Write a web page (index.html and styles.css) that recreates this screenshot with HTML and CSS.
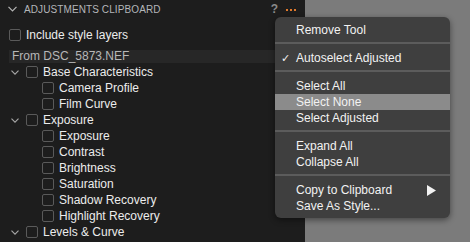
FILE: index.html
```html
<!DOCTYPE html>
<html lang="en">
<head>
  <meta charset="UTF-8" />
  <title>Adjustments Clipboard</title>
  <link rel="stylesheet" href="styles.css">
</head>
<body>
  <div class="screen">
    <div class="panel">
      <div class="panel-head">
        <svg class="chev" width="9" height="6" viewBox="0 0 9 6"><path d="M0.5 0.8 L4.5 4.8 L8.5 0.8" fill="none" stroke="#b5b5b5" stroke-width="1.2"/></svg>
        <span class="panel-title">ADJUSTMENTS CLIPBOARD</span>
        <span class="help">?</span>
        <span class="more">
          <i></i><i></i><i></i>
        </span>
      </div>

      <label class="include-row">
        <span class="box"></span>
        <span>Include style layers</span>
      </label>

      <div class="source">From DSC_5873.NEF</div>

      <ul class="tree">
        <li class="group">
          <svg class="chev" width="8" height="5" viewBox="0 0 8 5"><path d="M0.5 0.6 L4 4.2 L7.5 0.6" fill="none" stroke="#a8a8a8" stroke-width="1.1"/></svg>
          <span class="box"></span>Base Characteristics
        </li>
        <li class="item"><span class="box"></span>Camera Profile</li>
        <li class="item"><span class="box"></span>Film Curve</li>
        <li class="group">
          <svg class="chev" width="8" height="5" viewBox="0 0 8 5"><path d="M0.5 0.6 L4 4.2 L7.5 0.6" fill="none" stroke="#a8a8a8" stroke-width="1.1"/></svg>
          <span class="box"></span>Exposure
        </li>
        <li class="item"><span class="box"></span>Exposure</li>
        <li class="item"><span class="box"></span>Contrast</li>
        <li class="item"><span class="box"></span>Brightness</li>
        <li class="item"><span class="box"></span>Saturation</li>
        <li class="item"><span class="box"></span>Shadow Recovery</li>
        <li class="item"><span class="box"></span>Highlight Recovery</li>
        <li class="group">
          <svg class="chev" width="8" height="5" viewBox="0 0 8 5"><path d="M0.5 0.6 L4 4.2 L7.5 0.6" fill="none" stroke="#a8a8a8" stroke-width="1.1"/></svg>
          <span class="box"></span>Levels &amp; Curve
        </li>
      </ul>
    </div>
    <div class="backdrop"></div>

    <div class="menu">
      <div class="menu-item">Remove Tool</div>
      <div class="menu-sep"></div>
      <div class="menu-item"><span class="check">✓</span>Autoselect Adjusted</div>
      <div class="menu-sep"></div>
      <div class="menu-item">Select All</div>
      <div class="menu-item active">Select None</div>
      <div class="menu-item">Select Adjusted</div>
      <div class="menu-sep"></div>
      <div class="menu-item">Expand All</div>
      <div class="menu-item">Collapse All</div>
      <div class="menu-sep"></div>
      <div class="menu-item">Copy to Clipboard
        <svg class="sub" width="9" height="11" viewBox="0 0 9 11"><path d="M0 0 L9 5.5 L0 11 Z" fill="#f2f2f2"/></svg>
      </div>
      <div class="menu-item">Save As Style...</div>
    </div>
  </div>
</body>
</html>
```

FILE: styles.css
```css
* {
  margin: 0;
  padding: 0;
  box-sizing: border-box;
}

body {
  width: 470px;
  height: 242px;
  overflow: hidden;
  background: #7b7b7b;
  font-family: 'Liberation Sans', Arial, sans-serif;
  font-size: 12px;
  color: #ececec;
}

.screen {
  position: relative;
  display: flex;
  height: 242px;
}

.panel {
  width: 305px;
  height: 242px;
  background: #1d1d1d;
  overflow: hidden;
}

.backdrop {
  flex: 1;
  background: #7b7b7b;
}

.panel-head {
  display: flex;
  align-items: center;
  height: 18px;
  padding-left: 8px;
}

.panel-head .chev {
  margin-right: 7px;
}

.panel-title {
  font-size: 10px;
  color: #b4b6ba;
  letter-spacing: 0.1px;
}

.help {
  margin-left: auto;
  font-weight: bold;
  font-size: 12px;
  color: #8a8a8a;
}

.more {
  display: flex;
  gap: 2px;
  margin-left: 8px;
  margin-right: 9px;
  padding-top: 1px;
}

.more i {
  width: 2px;
  height: 2px;
  background: #e0792c;
}

.box {
  display: inline-block;
  width: 12px;
  height: 12px;
  border: 1px solid #5a5a5a;
  border-radius: 2px;
  background: #1d1d1d;
  margin-right: 5px;
  flex-shrink: 0;
}

.include-row {
  display: flex;
  align-items: center;
  height: 16px;
  margin-top: 9px;
  padding-left: 9px;
}

.source {
  height: 13px;
  line-height: 13px;
  margin: 7px 0 1px 9px;
  padding-left: 3px;
  background: #272727;
  color: #b8b8b8;
}

.tree {
  list-style: none;
}

.tree li {
  display: flex;
  align-items: center;
  height: 16px;
}

.tree .group {
  padding-left: 11px;
}

.tree .group .chev {
  margin-right: 7px;
}

.tree .item {
  padding-left: 42px;
}

.menu {
  position: absolute;
  left: 275px;
  top: 17px;
  width: 175px;
  padding: 5px 0 4px;
  background: #3f3f3f;
  border-radius: 6px;
  box-shadow: 0 2px 6px rgba(0, 0, 0, 0.45);
}

.menu-item {
  position: relative;
  display: flex;
  align-items: center;
  height: 16px;
  padding-left: 21px;
  color: #f2f2f2;
}

.menu-item.active {
  background: #8b8b8b;
}

.check {
  position: absolute;
  left: 6px;
  font-family: 'DejaVu Sans', sans-serif;
  font-size: 11px;
}

.sub {
  position: absolute;
  right: 14px;
}

.menu-sep {
  height: 2px;
  margin: 4px 0 6px;
  background: #5c5c5c;
}
```
